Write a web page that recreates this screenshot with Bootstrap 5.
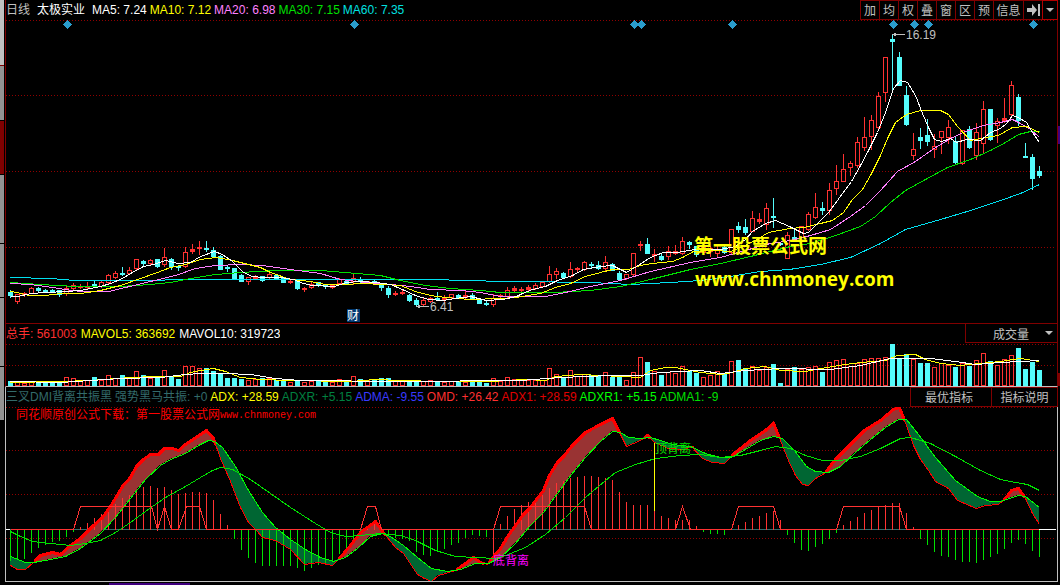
<!DOCTYPE html>
<html lang="zh-CN">
<head>
<meta charset="utf-8">
<meta name="viewport" content="width=device-width, initial-scale=1">
<title>太极实业 日线</title>
<link href="https://cdn.jsdelivr.net/npm/bootstrap@5.3.0/dist/css/bootstrap.min.css" rel="stylesheet">
<style>
  body { background:#000; color:#c0c0c0; font-family:"Liberation Sans","Noto Sans CJK SC",sans-serif; font-size:12px; line-height:20px; }
  .rail { width:4px; margin-right:1px; }
  .rail div { background:#939393; border-bottom:1px solid #000; }
  .rail .on { background:#c0c0c0; border-color:#800000; }
  .rail .hot { background:#800000; }
  .h-65 { height:66px; } .h-54 { height:54px; } .h-69 { height:69px; } .h-55 { height:55px; }
  .edge { width:2px; padding-top:126px; }
  .edge .violet { height:18px; background:#400080; margin-bottom:229px; }
  .edge .maroon { height:13px; background:#800000; }
  .desk { min-width:0; }
  .pane { border:solid #800000; border-width:0 1px 1px 1px; }
  .pane.lit { border-bottom-color:#c0c0c0; }
  .pane.sub { border-color:#c0c0c0; }
  .pane svg.plot { display:block; width:100%; height:auto; }
  .bar-top { height:20px; } .bar-mid { height:19px; }
  .legend { gap:3px; white-space:nowrap; overflow:hidden; }
  .tools { margin-right:-1px; }
  .bar-mid .tools { margin-top:-1px; }
  .tools button, .tools select { background:#000; color:#c0c0c0; border:1px solid #800000; border-radius:0; padding:1px 0 0; line-height:18px; font-size:12px; margin-left:-1px; height:20px; white-space:nowrap; }
  .tools button svg { margin-top:-1px; }
  .w-key { width:20px; } .w-info { width:31px; } .w-drop { width:16px; } .w-best { width:82px; } .w-help { width:67px; }
  .tools select { appearance:none; width:93px; padding-left:27px; padding-top:2px; }
  .tools .w-drop { border-color:#b00000; }
  .arrow { right:5px; top:8px; pointer-events:none; }
  .c-w{color:#fff}.c-y{color:#ff0}.c-m{color:#ff80ff}.c-g{color:#00e000}.c-c{color:#00e0e0}
  .c-r{color:#ff3030}.c-t{color:#336b6b}.c-dg{color:#008040}.c-b{color:#3a3aff}.c-rr{color:#e00000}.c-lg{color:#00ff00}
  .plot { shape-rendering:crispEdges; }
  .plot text { font-family:"Liberation Sans","Noto Sans CJK SC",sans-serif; font-size:12px; }
  .plot .brand { font-family:"Open Sans","Noto Sans CJK SC",sans-serif; font-size:19px; font-weight:700; }
  .plot .brand-cn { font-family:"Noto Sans CJK SC",sans-serif; }
  .plot .mono { font-family:"Liberation Mono",monospace; font-size:10px; }
  .taskbar i { height:2px; width:81px; margin-left:104px; background:#400080; margin-top:1px; }
</style>
</head>
<body>
<div class="d-flex">
  <aside class="rail flex-shrink-0"><div class="on h-65"></div><div class="h-55"></div><div class="hot h-54"></div><div class="h-69"></div><div class="h-54"></div><div class="h-69"></div><div class="h-54"></div></aside>
  <main class="desk flex-grow-1">
    <section class="pane">
      <header class="bar-top d-flex justify-content-between">
        <div class="legend d-flex"><span>日线</span><span class="c-w ms-1 me-1">太极实业</span><span class="c-w">MA5: 7.24</span><span class="c-y">MA10: 7.12</span><span class="c-m">MA20: 6.98</span><span class="c-g">MA30: 7.15</span><span class="c-c">MA60: 7.35</span></div>
        <div class="tools d-flex flex-shrink-0">
          <button class="w-key">加</button><button class="w-key">均</button><button class="w-key">权</button><button class="w-key">叠</button><button class="w-key">窗</button><button class="w-key">区</button><button class="w-key">预</button><button class="w-info">信息</button><button class="w-key" aria-label="向右"><svg class="d-block mx-auto" width="13" height="12" viewBox="0 0 13 12" fill="#c0c0c0"><path d="M0 4h5V0l5 6-5 6V8H0zM11 0h2v12h-2z"/></svg></button><button class="w-drop" aria-label="更多"><svg class="d-block mx-auto" width="8" height="4" viewBox="0 0 8 4"><path d="M0 0h8L4 4z" fill="#c0c0c0"/></svg></button>
        </div>
      </header>
      <svg class="plot" id="price" viewBox="6 20 1051 303"></svg>
    </section>
    <section class="pane lit">
      <header class="bar-mid d-flex justify-content-between">
        <div class="legend d-flex gap-1"><span class="c-r">总手: 561003</span><span class="c-y">MAVOL5: 363692</span><span class="c-w">MAVOL10: 319723</span></div>
        <div class="tools position-relative"><select aria-label="副图指标"><option>成交量</option></select><svg class="arrow position-absolute" width="8" height="4" viewBox="0 0 8 4"><path d="M0 0h8L4 4z" fill="#c0c0c0"/></svg></div>
      </header>
      <svg class="plot" id="volume" viewBox="6 343 1051 43"></svg>
    </section>
    <section class="pane sub">
      <header class="bar-top d-flex justify-content-between">
        <div class="legend d-flex"><span class="c-t">三叉DMI背离共振黑</span><span class="c-t">强势黑马共振: +0</span><span class="c-y">ADX: +28.59</span><span class="c-dg">ADXR: +5.15</span><span class="c-b">ADMA: -9.55</span><span class="c-r">OMD: +26.42</span><span class="c-rr">ADX1: +28.59</span><span class="c-lg">ADXR1: +5.15</span><span class="c-g">ADMA1: -9</span></div>
        <div class="tools d-flex flex-shrink-0"><button class="w-best pe-1">最优指标</button><button class="w-help">指标说明</button></div>
      </header>
      <svg class="plot" id="dmi" viewBox="6 407 1051 174"></svg>
    </section>
    <div class="taskbar d-flex"><i></i></div>
  </main>
  <aside class="edge flex-shrink-0"><div class="violet"></div><div class="maroon"></div></aside>
</div>
<script src="https://cdn.jsdelivr.net/npm/bootstrap@5.3.0/dist/js/bootstrap.bundle.min.js"></script>
<script>
// One candle per entry: direction (c = down, r = up), high, body top, body bottom, low
const candles = `c290,292,295,297 r294,294,301,303 r292,293,294,296 r287,288,293,293 c287,288,290,291 c289,290,291,292 c289,290,291,292 c290,290,294,296 r286,288,293,295 r283,285,288,289 r284,286,287,288 r282,286,287,288 c281,284,286,287 r281,282,286,287 r274,275,282,283 r271,273,277,278 c267,273,274,275 r267,270,273,274 r259,259,268,270 c260,261,263,266 r259,260,263,264 c259,259,266,267 r248,257,264,266 c258,259,266,269 c265,266,267,270 r247,252,266,267 r244,249,251,253 r241,247,248,254 c241,248,249,251 c247,250,256,257 c255,256,269,269 c265,267,268,271 c268,268,279,279 c274,275,281,281 r277,277,281,284 r275,276,278,279 c276,276,280,281 r272,274,277,278 c275,275,279,279 c277,277,282,282 r280,281,282,283 c281,281,288,289 r287,288,289,291 r282,284,287,288 c282,282,285,286 c284,285,286,288 r285,285,287,288 r278,279,283,284 c280,281,284,284 r274,278,281,284 c277,280,281,282 r281,281,282,283 c280,281,282,283 c284,284,287,290 c286,288,294,297 r291,293,294,295 r290,292,293,294 c294,295,300,301 c298,300,304,306 r298,300,304,306 r297,298,301,302 c292,298,299,300 r295,297,299,302 r294,294,297,298 c294,295,297,298 r291,295,297,298 c293,295,298,299 c298,299,303,303 c300,303,304,305 r294,298,304,306 r294,295,296,297 r287,290,296,297 r286,288,290,292 r287,289,290,291 r285,287,289,290 r283,285,288,289 r282,282,286,286 r266,274,281,282 r268,271,274,278 c272,273,277,278 r262,269,276,277 r267,268,269,272 r261,262,269,270 c262,264,265,268 c261,265,268,269 r256,262,268,271 c263,264,270,270 c271,273,279,279 r274,274,278,279 r253,253,274,275 r241,244,245,250 c238,244,253,253 r249,254,255,261 c253,256,259,260 r246,251,256,259 r245,251,253,254 r237,241,253,254 c241,242,244,248 c246,246,254,256 r246,247,252,254 r246,248,251,256 r246,249,253,256 c246,247,252,253 r229,229,252,253 c222,226,229,232 c219,227,232,234 r211,218,231,231 r213,219,221,223 r203,208,224,229 c198,216,217,227 c242,243,244,245 r232,235,258,258 c228,237,238,239 r226,226,237,238 r212,214,229,230 r193,207,217,218 c202,208,210,214 r183,190,210,214 r165,181,188,194 r154,169,181,181 r161,163,167,175 r137,142,165,167 r117,137,147,150 r115,120,136,149 r92,96,127,128 r57,57,92,101 c34,39,41,90 c52,57,85,85 c86,95,124,125 r133,149,155,159 c128,137,140,148 c119,135,141,145 r134,146,149,157 r131,131,137,153 r120,127,137,143 c137,141,162,163 r130,130,163,164 c126,129,147,148 r123,132,155,159 r101,109,143,153 c109,109,139,140 r118,121,125,142 r98,118,120,122 r81,85,114,116 c94,97,120,125 c143,156,157,157 c154,157,178,189 c166,171,175,177`
  .split(' ').map(s => [s[0] === 'c', ...s.slice(1).split(',').map(Number)]);

const volumes = [381,382,383,382,382,382,382,382,377,378,380,380,377,380,375,378,375,377,371,375,378,376,370,376,379,366,366,368,368,371,374,378,378,379,380,379,378,378,380,380,382,380,382,381,381,381,382,379,380,376,379,380,379,378,378,381,381,380,380,381,380,381,382,381,382,382,381,382,383,378,381,377,379,380,380,380,380,368,374,378,370,376,374,375,375,372,377,377,380,372,357,362,371,375,372,373,366,371,373,377,375,371,374,361,360,368,366,370,367,364,383,369,367,369,367,366,372,362,360,359,366,363,359,358,358,357,344,359,354,359,363,363,367,363,365,367,363,366,360,353,361,365,359,355,348,369,362,370];

const bars = [560,559,558,552,547,544,541,540,536,531,527,523,518,514,510,504,498,495,492,487,486,488,487,490,494,493,492,492,493,500,514,525,538,549,557,562,565,565,565,565,565,567,570,567,564,562,560,553,547,542,535,527,523,527,534,537,538,540,551,554,555,550,548,544,542,537,534,535,536,555,524,516,509,505,502,501,495,488,483,481,478,477,476,476,477,478,480,492,502,505,505,505,511,516,518,520,520,520,526,531,533,533,534,529,525,522,518,516,513,511,520,534,542,549,550,546,543,538,532,525,521,517,513,510,507,505,503,503,513,527,538,544,551,555,556,559,561,561,562,559,556,553,548,542,539,543,550,556];

const X = i => 10 + 7 * i;
const rect = (x, y, w, h, f) => `<rect x="${x}" y="${y}" width="${w}" height="${h}" fill="${f}"/>`;
const line = (pts, c, w = 1) => `<polyline points="${pts}" fill="none" stroke="${c}" stroke-width="${w}" transform="translate(.5 .5)"/>`;
const grid = ys => ys.map(y => `<path d="M6 ${y + .5}H1056" stroke="#900000" stroke-dasharray="1 2"/>`).join('');
const label = (x, y, c, t, k = '') => `<text x="${x}" y="${y}" fill="${c}" class="${k}">${t}</text>`;
const RED = '#ff3232', CYAN = '#54fcfc';

// Price pane
let out = grid([20, 95, 171, 247]);
candles.forEach(([down, hi, top, bot, lo], i) => {
  const x = X(i), h = Math.max(1, bot - top + 1);
  if (down) out += rect(x, hi, 1, lo - hi + 1, CYAN) + rect(x - 2, top, 5, h, CYAN);
  else {
    out += rect(x, hi, 1, top - hi, RED) + rect(x, bot, 1, Math.max(0, lo - bot + 1), RED);
    out += h < 4 ? rect(x - 2, top, 5, h, RED) : `<rect x="${x - 1.5}" y="${top + .5}" width="4" height="${h - 1}" fill="none" stroke="${RED}"/>`;
  }
});
out += line('10,277 50,278 75,280 130,280 200,279 330,279 447,279 450,280 520,281 590,282 630,284 670,282 700,280 730,276 760,271 789,269 820,264 850,257 880,243 905,229 940,219 970,210 1000,200 1020,193 1039,184', '#00e0f0');
out += line('10,282 40,284 75,286 120,286 150,284 170,282 190,278 215,274 240,272 275,270 320,270 345,272 380,275 400,280 425,285 450,288 480,290 500,292 553,292 590,290 620,286 650,279 690,269 720,263 750,256 790,246 810,243 835,235 860,226 875,216 890,202 905,190 925,179 947,167 970,159 990,150 1005,142 1018,134 1030,131 1039,131', '#00e000');
out += line('10,283 30,284 45,286 65,289 80,291 108,291 125,287 150,281 175,275 195,268 215,265 240,264 262,265 290,269 320,273 340,279 365,282 390,284 410,286 430,289 460,290 480,292 500,296 545,296 565,292 590,286 620,280 650,271 690,262 720,257 745,250 765,244 790,240 810,235 830,229 850,216 865,205 880,190 897,171 915,161 932,149 950,138 965,131 983,125 1000,122 1012,119 1020,123 1030,129 1039,137', '#ff80ff');
out += line('10,291 17,292 28,295 45,295 60,293 80,293 100,290 120,285 140,278 157,272 170,267 185,264 200,259 215,257 228,259 248,264 260,267 270,272 290,279 310,281 325,284 345,284 360,283 385,284 400,285 415,291 430,295 445,297 470,299 500,298 515,297 540,293 555,287 570,283 585,276 600,272 612,269 628,269 640,265 652,263 672,261 682,257 693,251 715,250 730,251 745,245 758,238 768,232 789,228 803,227 820,223 832,220 843,212 852,199 862,189 871,173 880,155 887,138 895,122 906,114 920,110 940,110 948,114 957,126 970,140 980,138 998,135 1012,127 1026,126 1039,132', '#ffff00');
out += line('10,296 17,296 31,293 45,292 66,291 80,290 100,286 110,283 122,278 130,273 143,266 153,264 165,260 178,263 190,262 200,256 214,251 222,254 232,261 243,272 252,276 262,277 280,277 293,279 303,283 312,285 334,286 346,282 360,281 376,282 390,284 402,289 415,295 428,299 442,300 455,298 470,296 486,300 502,299 516,296 522,293 532,289 545,286 557,280 572,275 583,269 600,266 612,265 626,272 636,266 650,257 663,252 676,252 695,249 720,249 735,246 745,239 752,231 765,223 775,220 789,226 803,233 808,232 815,225 828,212 851,181 860,165 868,150 877,132 885,112 893,88 900,80 907,82 915,95 922,113 928,127 934,139 941,141 950,138 956,142 966,139 980,140 990,132 1000,128 1006,123 1012,115 1018,117 1026,122 1032,132 1039,142', '#ffffff');
[67, 354, 634, 641, 732, 893, 914, 928, 1033].forEach(x => out += `<path d="M${x - 4} 24.5l4.500-4.500 4.500 4.500-4.500 4.500z" fill="#2a9ccc"/>`);
out += `<path d="M892 34.500h13M417 306.500h12" stroke="#c0c0c0"/><path d="M892 34.500l4-2v4zM416 306.500l4-2v4z" fill="#c0c0c0"/>`;
out += label(906, 39, '#c0c0c0', '16.19') + label(430, 311, '#c0c0c0', '6.41');
out += rect(347, 309, 13, 13, '#003870') + label(347, 320, '#fff', '财');
out += label(694, 253, '#ff0', '第一股票公式网', 'brand brand-cn') + label(695, 286, '#ff0', 'www.chnmoney.com', 'brand');
document.getElementById('price').innerHTML = out;

// Volume pane
out = grid([344, 365]);
volumes.forEach((y, i) => {
  out += candles[i][0] ? rect(X(i) - 2, y, 5, 386 - y, CYAN)
    : `<rect x="${X(i) - 1.5}" y="${y + .5}" width="4" height="${385 - y}" fill="none" stroke="${RED}"/>`;
});
out += line('10,382 60,381 90,380 130,377 155,376 180,376 190,372 200,370 213,368 225,371 240,377 260,379 290,380 350,381 375,379 400,380 440,381 490,381 525,379 545,380 555,376 580,374 600,375 620,376 640,377 650,370 665,367 675,367 700,372 720,374 732,372 745,368 765,366 780,370 805,371 820,368 845,364 860,362 885,360 897,355 915,354 925,359 940,363 960,365 980,363 1000,361 1020,358 1039,361', '#ffff00');
out += line('10,381 60,382 120,378 160,377 185,374 200,373 225,373 250,374 275,378 300,380 400,381 520,380 560,377 610,375 640,375 660,372 700,370 720,373 745,370 780,368 830,369 860,365 890,358 930,358 955,361 975,364 1000,362 1039,360', '#ffffff');
document.getElementById('volume').innerHTML = out;

// Indicator pane
const parse = s => s.split(' ').map(p => p.split(',').map(Number));
const at = (pts, x) => {
  let k = 1;
  while (k < pts.length - 1 && pts[k][0] < x) k++;
  const [a, b] = pts[k - 1], [c, d] = pts[k];
  return b + (d - b) * (x - a) / (c - a);
};
const fast = parse('10,565 17,569 25,569 33,562 40,555 52,552 60,554 70,545 80,538 92,526 102,517 110,506 122,486 130,477 136,466 143,459 150,454 158,454 164,448 172,448 178,450 185,444 197,436 206,430 213,438 220,458 230,481 240,507 248,522 256,530 262,537 275,540 290,549 304,564 318,562 332,565 339,558 350,545 360,532 375,521 382,531 395,547 403,553 417,574 424,578 431,581 438,575 455,570 465,563 473,557 480,562 487,564 494,555 500,548 508,535 515,525 523,514 530,507 543,490 549,475 557,462 564,455 571,446 585,432 600,424 612,418 618,430 626,446 640,440 647,435 654,442 668,448 683,449 691,446 702,458 712,462 724,463 735,452 750,440 765,430 773,423 780,440 788,460 795,475 802,484 808,485 815,478 824,473 835,459 850,444 864,430 880,420 893,409 899,407 906,425 913,445 920,459 928,470 935,481 948,488 957,500 976,508 985,505 998,504 1005,498 1011,490 1018,488 1025,498 1032,513 1039,524');
const mid = parse('10,556 25,562 33,562 45,560 65,556 80,548 100,533 115,517 130,498 145,479 160,465 170,459 185,453 200,444 208,440 214,441 222,447 235,466 248,490 262,512 275,527 290,539 305,549 320,557 333,561 345,557 357,548 370,536 382,533 390,536 403,545 417,557 431,568 447,571 460,569 475,563 488,563 500,557 515,543 530,525 543,512 557,493 571,474 585,457 600,441 612,431 620,432 628,437 640,438 650,437 660,440 672,444 690,446 705,453 720,457 731,457 745,449 760,440 773,436 782,438 794,450 806,466 815,471 828,472 840,466 855,452 870,439 885,427 898,419 906,419 918,434 935,457 955,480 977,496 990,501 1000,501 1018,495 1025,496 1039,507');
out = grid([407, 450, 494, 538]) + rect(10, 529, 1030, 1, '#336b6b');
let run = [], sign = null, edges = '';
const flush = () => {
  if (run.length > 1) {
    const top = run.map(x => `${x},${at(fast, x)}`), low = run.slice().reverse().map(x => `${x},${at(mid, x)}`);
    out += `<polygon points="${top.concat(low).join(' ')}" fill="${sign ? '#993333' : '#006633'}"/>`;
    edges += line(top.join(' '), '#ff0000', sign ? 3 : 1);
  }
};
for (let x = 10; x <= 1039; x++) {
  const s = at(fast, x) < at(mid, x);
  if (s !== sign) { run.push(x); flush(); run = []; sign = s; }
  run.push(x);
}
flush();
bars.forEach((y, i) => {
  out += y < 529 ? rect(X(i), y, 1, 530 - y, RED) : rect(X(i), 530, 1, y - 529, i === 69 ? RED : '#00e000');
});
out += edges + line(mid.join(' '), '#00ff00');
out += line('10,531 20,536 32,541 50,543 70,545 85,543 100,540 115,532 130,522 145,511 165,497 185,486 200,477 212,470 220,467 232,469 250,479 270,493 290,507 315,523 330,532 345,536 360,535 380,533 400,535 415,540 435,550 455,556 475,557 495,558 505,555 525,547 545,534 565,517 585,497 605,480 615,472 635,464 655,458 680,455 700,454 720,457 740,455 760,450 775,446 790,448 805,455 822,460 840,460 860,456 880,448 900,438 910,437 930,443 955,456 980,470 1000,479 1015,482 1027,484 1039,490', '#00e000');
// Signal line: each step rises a-b, stays high b-c, falls c-d
const steps = [[73, 80, 151, 157], [157, 164, 164, 171], [178, 186, 199, 206], [360, 367, 375, 381], [493, 500, 584, 591], [675, 682, 682, 690], [731, 738, 773, 780], [836, 843, 899, 906]];
let path = 'M10 529';
steps.forEach(([a, b, c, d]) => { path += `H${a}L${b} 506H${c}L${d} 529`; });
out += `<path d="${path}H1039" fill="none" stroke="${RED}" transform="translate(.5 .5)"/>`;
out += rect(6, 529, 4, 1, '#fff') + rect(1039, 529, 17, 1, '#fff') + rect(654, 443, 1, 68, '#ff0');
out += label(16, 419, '#f00', '同花顺原创公式下载：第一股票公式网') + label(220, 418, '#f00', 'www.chnmoney.com', 'mono');
out += label(655, 453, '#00e000', '顶背离') + label(493, 565, '#f0f', '底背离');
document.getElementById('dmi').innerHTML = out;
</script>
</body>
</html>
